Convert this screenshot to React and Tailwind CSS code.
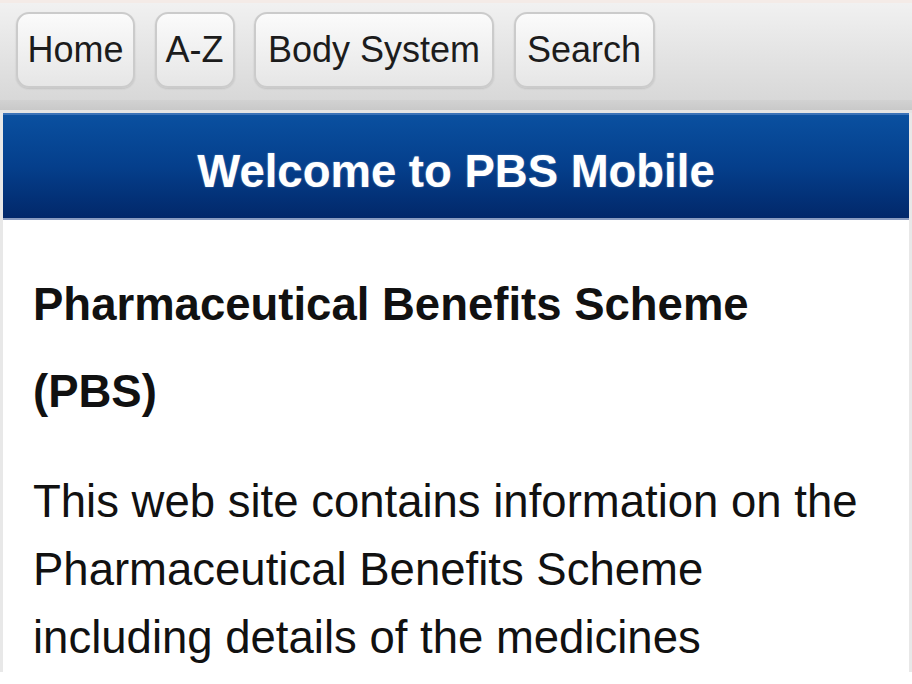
const tabs = [
  { label: 'Home', w: 'w-[119px]' },
  { label: 'A-Z', w: 'w-[80px]' },
  { label: 'Body System', w: 'w-[240px]' },
  { label: 'Search', w: 'w-[141px]' },
]

export default function App() {
  return (
    <div
      className="h-[684px] w-[912px] overflow-hidden bg-white"
      style={{ fontFamily: '"Liberation Sans", Arial, sans-serif' }}
    >
      {/* toolbar */}
      <div className="border-t-[3px] border-[#f4ebe7] bg-gradient-to-b from-[#f1f1f1] to-[#d8d8d8]">
        <div className="flex gap-[19.5px] px-4 pt-[9px] pb-[12px]">
          {tabs.map((t) => (
            <button
              key={t.label}
              type="button"
              className={`${t.w} h-[76px] rounded-[13px] border-2 border-[#cbcbcb] bg-gradient-to-b from-[#fbfbfb] to-[#e6e6e6] text-center text-[36px] leading-none text-[#1c1c1c] shadow-[0_1px_2px_rgba(0,0,0,0.12)]`}
            >
              {t.label}
            </button>
          ))}
        </div>
      </div>
      <div className="h-[10px] bg-gradient-to-b from-[#d2d2d2] to-[#c9c9c9]" />
      <div className="h-[3px] bg-[#e4e4e4]" />

      {/* page */}
      <div className="border-x-[3px] border-[#e8e8e8]">
        <div className="border-t-2 border-[#3a72b8] bg-gradient-to-b from-[#0a50a0] via-[#053f8c] to-[#02286a] pt-[32px] pb-[21px] text-center text-[45.5px] leading-[50px] font-bold text-white [text-shadow:0_0_2px_rgba(255,255,255,0.35)]">
          Welcome to PBS Mobile
        </div>
        <div className="h-[2px] bg-[#8a9cc0]" />
        <div className="pt-[41px] pr-[40px] pl-[30px] text-[#111]">
          <h1 className="text-[45.5px] leading-[87px] font-bold">
            Pharmaceutical Benefits Scheme (PBS)
          </h1>
          <p className="mt-[33px] text-[45.5px] leading-[68px]">
            This web site contains information on the Pharmaceutical Benefits
            Scheme including details of the medicines
          </p>
        </div>
      </div>
    </div>
  )
}
